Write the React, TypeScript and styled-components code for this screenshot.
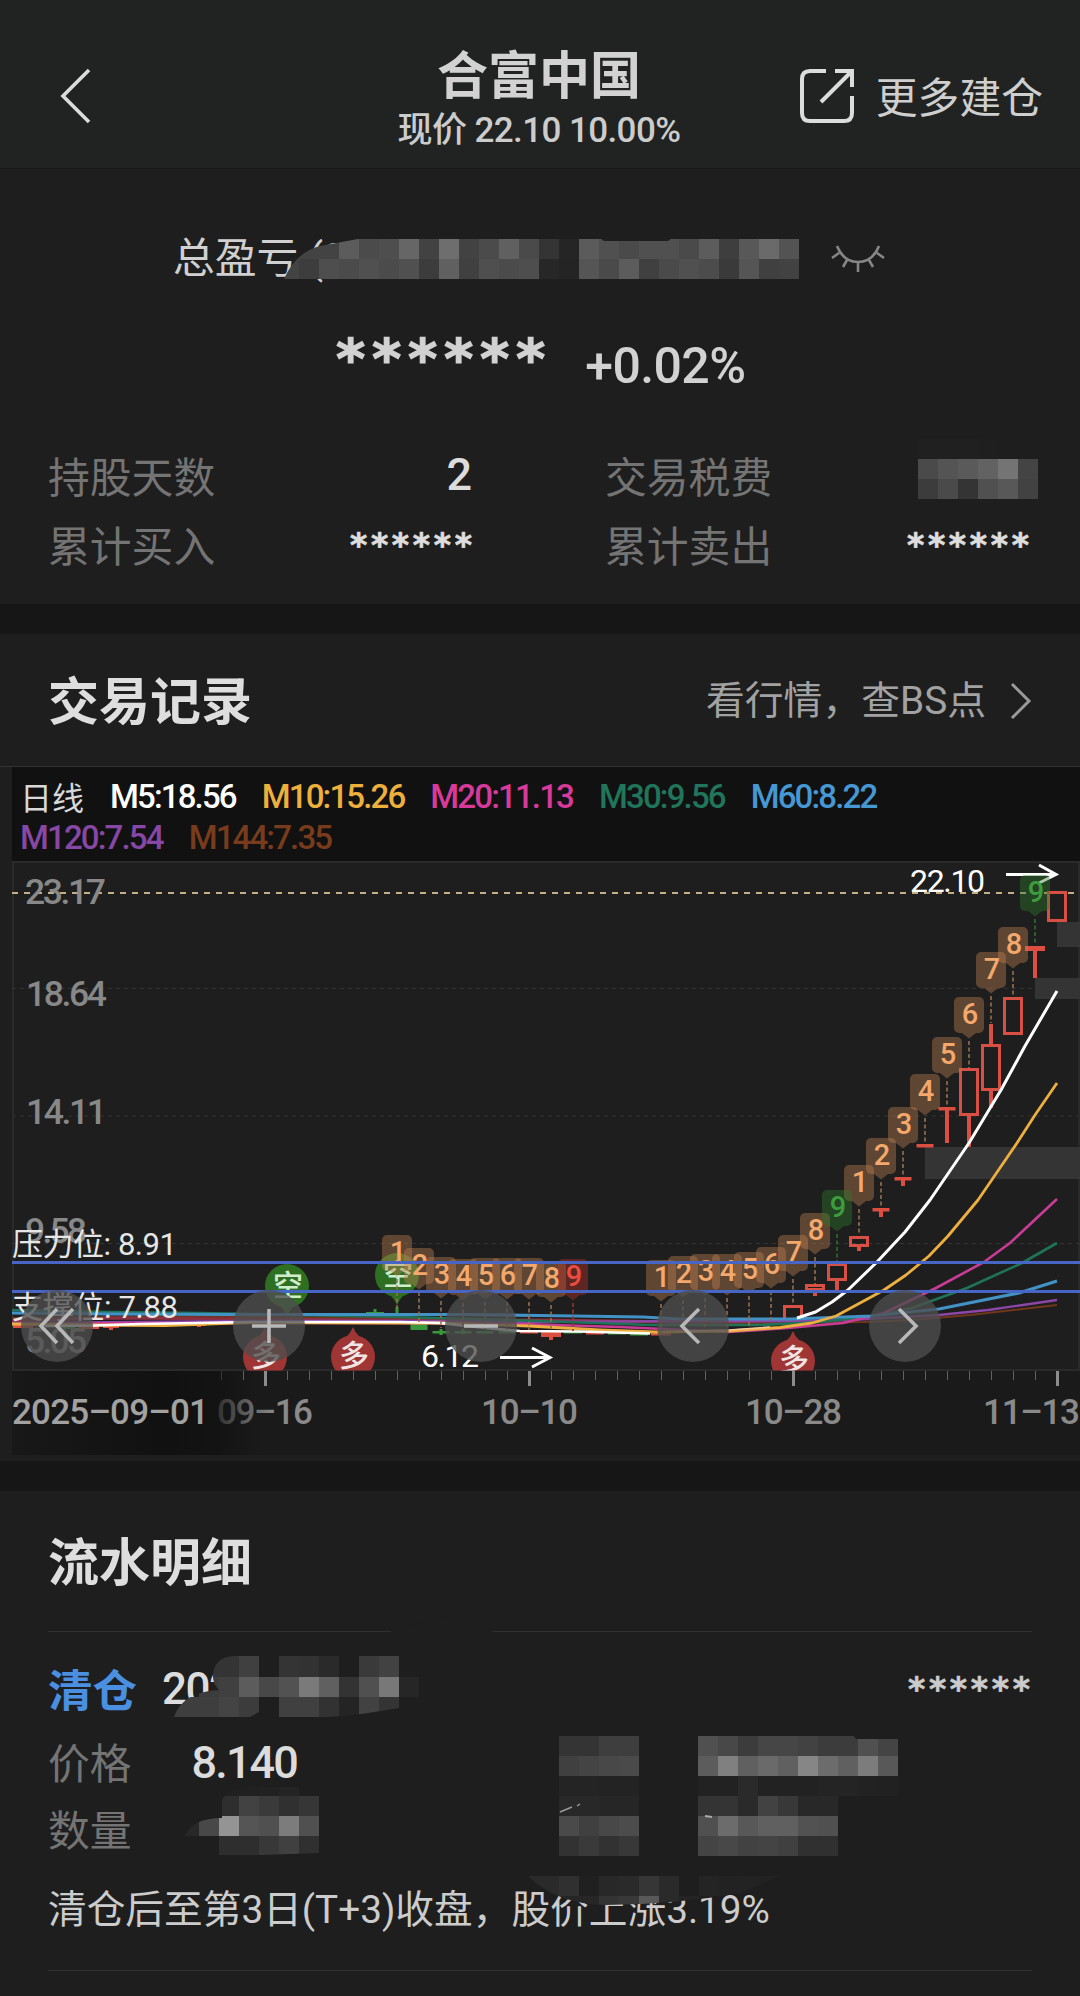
import React from "react";
import styled, { createGlobalStyle } from "styled-components";

const LATIN_CJK = `Roboto, "Noto Sans CJK SC", sans-serif`;
const CJK = `"Noto Sans CJK SC", sans-serif`;

const Global = createGlobalStyle`
  * { box-sizing: border-box; }
  body { margin: 0; background: #1e1e1e; }
`;

const Page = styled.main`
  width: 1080px;
  height: 1996px;
  overflow: hidden;
  background: #1e1e1e;
  color: #dcdcdc;
  font-family: ${LATIN_CJK};
  display: flex;
  flex-direction: column;
`;

const Text = styled.span<{ $size: number; $color?: string; $weight?: number; $track?: number; $line?: number; $cjk?: boolean }>`
  font-family: ${(p) => (p.$cjk ? CJK : LATIN_CJK)};
  font-size: ${(p) => p.$size}px;
  line-height: ${(p) => p.$line ?? 50}px;
  color: ${(p) => p.$color ?? "#dcdcdc"};
  font-weight: ${(p) => p.$weight ?? 400};
  letter-spacing: ${(p) => p.$track ?? 0}px;
  white-space: pre;
`;

const Header = styled.header`
  height: 169px;
  flex: none;
  background: #202322;
  border-bottom: 1px solid #191a1a;
  display: grid;
  grid-template-columns: 340px 398px 342px;
`;

const BackButton = styled.div`
  padding: 68px 0 0 59px;
`;

const HeaderTitle = styled.div`
  display: flex;
  flex-direction: column;
  align-items: center;
  padding-top: 46px;
`;

const HeaderAction = styled.div`
  display: flex;
  justify-content: flex-end;
  align-items: flex-start;
  gap: 21px;
  padding: 68px 37px 0 0;
`;

const Summary = styled.section`
  position: relative;
  height: 435px;
  flex: none;
  padding: 65px 48px 0;
`;

const TotalRow = styled.div`
  display: flex;
  justify-content: space-between;
  height: 50px;
  margin: 0 147px 0 125px;
`;

const EyeSlot = styled.div`
  padding-top: 11px;
`;

const ProfitRow = styled.div`
  display: flex;
  height: 90px;
  margin: 31px 0 0 288px;
`;

const Percent = styled.div`
  margin: 26px 0 0 40px;
`;

const Stats = styled.div`
  display: grid;
  grid-template-columns: 424px 424px;
  column-gap: 133px;
  row-gap: 19px;
  margin-top: 45px;
`;

const StatRow = styled.div`
  display: flex;
  justify-content: space-between;
  height: 50px;
`;

const Divider = styled.div`
  height: 30px;
  flex: none;
  background: #161616;
`;

const Records = styled.section`
  height: 827px;
  flex: none;
`;

const RecordsHead = styled.div`
  display: flex;
  justify-content: space-between;
  height: 133px;
  padding: 38px 48px 0 48px;
  border-bottom: 1px solid #323232;
`;

const MarketLink = styled.div`
  display: flex;
  gap: 24px;
  align-items: flex-start;
  padding-top: 3px;
`;

const ChevronSlot = styled.div`
  padding-top: 7px;
`;

const Legend = styled.div`
  height: 94px;
  margin-left: 12px;
  background: #111111;
  padding: 9px 8px;
`;

const LegendRow = styled.div`
  display: flex;
  gap: 26px;
  height: 41px;
`;

const ChartBox = styled.div`
  position: relative;
  height: 600px;
`;

const Controls = styled.div`
  position: absolute;
  left: 21px;
  top: 429px;
  display: flex;
  gap: 140px;
`;

const RoundButton = styled.button`
  width: 72px;
  height: 72px;
  padding: 0;
  border: 0;
  border-radius: 50%;
  background: rgba(78, 78, 78, 0.78);
  display: flex;
  align-items: center;
  justify-content: center;
`;

const Details = styled.section`
  position: relative;
  flex: none;
  height: 505px;
  padding: 0 48px;
`;

const DetailsTitle = styled.div`
  height: 141px;
  padding-top: 40px;
  border-bottom: 1px solid #303030;
`;

const EntryHead = styled.div`
  display: flex;
  justify-content: space-between;
  height: 104px;
  padding: 31px 2px 0 0;
`;

const EntryName = styled.div`
  display: flex;
  gap: 25px;
`;

const Field = styled.div<{ $height: number }>`
  display: flex;
  height: ${(p) => p.$height}px;
  gap: 60px;
`;

const FieldValue = styled.div`
  padding-top: 2px;
`;

const Note = styled.div`
  height: 94px;
  padding-top: 8px;
  border-bottom: 1px solid #303030;
`;

const Overlay = styled.svg`
  position: absolute;
  left: 0;
  top: 0;
  pointer-events: none;
`;

const StarText = styled.span<{ $size: number; $track: number; $top: number; $stroke: number; $color?: string }>`
  font-family: "DejaVu Sans", sans-serif;
  font-weight: 700;
  font-size: ${(p) => p.$size}px;
  line-height: 50px;
  letter-spacing: ${(p) => p.$track}px;
  margin-right: ${(p) => -p.$track}px;
  color: ${(p) => p.$color ?? "#dedede"};
  -webkit-text-stroke: ${(p) => p.$stroke}px ${(p) => p.$color ?? "#dedede"};
  padding-top: ${(p) => p.$top}px;
`;

/* ---------- pixelated privacy blocks ---------- */

type Row = { x: number; y: number; h?: number; c: string };

function Mosaic({ rows, clip }: { rows: Row[]; clip?: string }) {
  return (
    <g clipPath={clip ? `url(#${clip})` : undefined} shapeRendering="crispEdges">
      {rows.map((r, j) =>
        r.c.split(" ").map((c, i) => (
          <rect key={`${j}-${i}`} x={r.x + i * 20} y={r.y} width={20} height={r.h ?? 20} fill={`#${c}${c}${c}`} />
        ))
      )}
    </g>
  );
}

const totalRows: Row[] = [
  { x: 279, y: 239, c: "43 43 43 5c 4b 4e 66 42 6e 42 4b 60 4a 34 25 5b 50 4a 50 50 4a 5c 3e 58 6a 53" },
  { x: 279, y: 259, c: "43 3d 4e 4b 50 4b 50 3c 60 40 4f 4b 4e 27 24 55 4a 5c 40 4a 50 4c 3a 55 40 42" },
];
const feeRows: Row[] = [
  { x: 918, y: 439, c: "20 20 20 1f 1e 1e" },
  { x: 918, y: 459, c: "4a 54 5a 62 74 44" },
  { x: 918, y: 479, c: "3c 4a 34 50 58 42" },
];
const dateRows: Row[] = [
  { x: 199, y: 1656, h: 21, c: "34 34 40 1e 34 32 2a 1e 3a 42" },
  { x: 199, y: 1677, c: "3c 40 5c 48 52 7a 60 33 50 78 26" },
  { x: 159, y: 1697, c: "3e 3e 3e 44 3c 1e 40 40 32 24 42 34" },
];
const qtyRows: Row[] = [
  { x: 219, y: 1787, h: 9, c: "20 20 21 24 1e" },
  { x: 219, y: 1796, c: "2e 42 3a 30 36" },
  { x: 179, y: 1816, c: "28 48 94 55 50 7c 50" },
  { x: 219, y: 1836, h: 19, c: "2e 2e 38 40 30" },
];
const labelRows: Row[] = [
  { x: 559, y: 1736, c: "34 34 3e 3e" },
  { x: 559, y: 1756, c: "40 44 48 4a" },
  { x: 559, y: 1776, c: "24 24 23 23" },
  { x: 559, y: 1796, c: "28 28 26 26" },
  { x: 559, y: 1816, c: "4a 40 48 4c" },
  { x: 559, y: 1836, c: "32 3a 32 38" },
];
const valueRows: Row[] = [
  { x: 698, y: 1736, c: "50 48 3c 46 46 42 3c 3c 50 44" },
  { x: 698, y: 1756, c: "5c 80 60 6a 60 86 6c 60 7c 58" },
  { x: 698, y: 1776, c: "22 22 2a 22 22 22 24 24 22 21" },
  { x: 698, y: 1796, c: "34 34 2a 42 38 28 28" },
  { x: 698, y: 1816, c: "50 6c 58 60 60 52 50" },
  { x: 698, y: 1836, c: "44 48 42 44 40 30 30" },
];
const smearRows: Row[] = [
  { x: 519, y: 1876, c: "2a 2a 30 20 28 2a 36 2a 1e 24 22 23 22" },
  { x: 519, y: 1896, c: "26 26 26 26 33 38 58 2a 24 1f 1f 1f 1f" },
];

/* ---------- chart ---------- */

const INDICATORS = [
  ["M5:18.56", "#ffffff"],
  ["M10:15.26", "#edb03c"],
  ["M20:11.13", "#d83a9c"],
  ["M30:9.56", "#20755a"],
  ["M60:8.22", "#4698d4"],
] as const;

const INDICATORS_2 = [
  ["M120:7.54", "#8648a4"],
  ["M144:7.35", "#783c1c"],
] as const;

type Badge = [x: number, top: number, n: string, to: number];

const badges: Badge[] = [
  [397, 1235, "1", 1308],
  [419, 1248, "2", 1322],
  [441, 1257, "3", 1328],
  [463, 1259, "4", 1330],
  [485, 1258, "5", 1330],
  [507, 1258, "6", 1330],
  [529, 1258, "7", 1330],
  [551, 1261, "8", 1331],
  [661, 1260, "1", 1333],
  [683, 1256, "2", 1328],
  [705, 1254, "3", 1327],
  [727, 1254, "4", 1327],
  [749, 1252, "5", 1326],
  [771, 1247, "6", 1320],
  [793, 1235, "7", 1305],
  [815, 1213, "8", 1284],
  [859, 1165, "1", 1235],
  [881, 1138, "2", 1208],
  [903, 1107, "3", 1177],
  [925, 1074, "4", 1144],
  [947, 1037, "5", 1107],
  [969, 997, "6", 1068],
  [991, 952, "7", 1023],
  [1013, 927, "8", 998],
];
const greenBadges: Badge[] = [
  [837, 1190, "9", 1262],
  [1035, 875, "9", 945],
];
const redBadges: Badge[] = [[573, 1259, "9", 1331]];

function Badges({ list, fill, ink, line }: { list: Badge[]; fill: string; ink: string; line: string }) {
  return (
    <>
      {list.map(([x, t, n, to]) => (
        <g key={x}>
          <path
            d={`M${x - 10} ${t}h20a5 5 0 0 1 5 5v26a5 5 0 0 1 -5 5h-3l-7 5.500l-7 -5.500h-3a5 5 0 0 1 -5 -5v-26a5 5 0 0 1 5 -5z`}
            fill={fill}
          />
          <path d={`M${x} ${t + 44}V${to}`} stroke={line} strokeWidth={1.6} strokeDasharray="4 2.5" />
          <text x={x + 1} y={t + 27} textAnchor="middle" fontSize={29} fontWeight={500} fill={ink}>
            {n}
          </text>
        </g>
      ))}
    </>
  );
}

function Pin({ x, y, up }: { x: number; y: number; up?: boolean }) {
  const s = up ? -1 : 1;
  return (
    <g>
      <path
        d={`M${x - 20} ${y + s * 9}Q${x - 3} ${y + s * 21} ${x} ${y + s * 30}Q${x + 3} ${y + s * 21} ${x + 20} ${y + s * 9}z`}
        fill={up ? "#9f3534" : "#2f6f22"}
      />
      <circle cx={x} cy={y} r={22} fill={up ? "#9f3534" : "#2f6f22"} />
      <text x={x + 1} y={up ? y + 9 : y + 10} textAnchor="middle" fontSize={30} fontWeight={500} fill={up ? "#f0e4e4" : "#cfeccb"}>
        {up ? "多" : "空"}
      </text>
    </g>
  );
}

/* centre x, body top, body bottom, high, low */
const hollow = [
  [1057, 891, 922, 891, 922],
  [1013, 997, 1035, 997, 1035],
  [991, 1044, 1091, 1024, 1108],
  [969, 1068, 1116, 1068, 1147],
  [859, 1236, 1247, 1236, 1251],
  [837, 1263, 1281, 1263, 1290],
  [815, 1284, 1291, 1284, 1296],
  [793, 1305, 1322, 1305, 1322],
];
/* centre x, bar top, bar height, half width, high, low */
const red = [
  [1035, 946, 5, 10, 946, 978],
  [947, 1107, 3.5, 8.5, 1107, 1143],
  [925, 1144, 3.5, 8.5, 1144, 1147],
  [903, 1177, 3.5, 8.5, 1177, 1186],
  [881, 1208, 3.5, 8.5, 1208, 1217],
  [551, 1332, 5, 10, 1332, 1340],
  [529, 1331, 2.5, 9, 1331, 1333],
  [595, 1332, 2.5, 9, 1332, 1334],
  [661, 1333, 2.5, 10, 1333, 1335],
  [353, 1321, 3, 10, 1321, 1324],
  [23, 1323, 5, 10, 1323, 1328],
  [89, 1326, 3, 10, 1326, 1329],
  [111, 1325, 3, 8, 1325, 1330],
  [199, 1323, 3, 7, 1323, 1327],
];
const green = [
  [419, 1324, 6, 8.5, 1324, 1330],
  [441, 1331, 2.5, 8.5, 1329, 1335],
  [463, 1331, 2.5, 8.5, 1329, 1334],
  [485, 1331, 2.5, 8.5, 1331, 1333],
  [507, 1331, 2.5, 8.5, 1331, 1333],
  [573, 1331, 2.5, 9, 1331, 1333],
  [617, 1332, 2.5, 9, 1332, 1334],
  [639, 1333, 2.5, 9, 1333, 1335],
  [375, 1312, 2, 9, 1309, 1314],
  [331, 1322, 2, 7, 1322, 1324],
  [397, 1313, 2, 5, 1307, 1315],
  [67, 1326, 3, 8, 1326, 1329],
];

const ticks = Array.from({ length: 39 }, (_, k) => ({ x: 1057 - 22 * k, big: k % 12 === 0 }));

const averages: [string, string, number][] = [
  ["#71371a", "12,1318 200,1316.500 400,1318 540,1321 700,1323 793,1323 864,1322 912,1320 970,1315 1057,1305", 2],
  ["#8a3040", "12,1321 110,1318 250,1319 400,1320 540,1320 690,1322 790,1321", 3],
  ["#8c46a8", "12,1323 140,1322 260,1321 400,1321 540,1322 700,1321 790,1321 850,1320 939,1315 988,1310 1057,1300", 2.4],
  ["#1f7358", "12,1310 110,1312 200,1313 400,1317 540,1321 650,1325 760,1325 820,1322 867,1317 912,1308 967,1288 1022,1263 1057,1243", 2.6],
  ["#c83c96", "12,1324 140,1323 400,1323 520,1324 620,1327 729,1332 788,1328 843,1323 884,1313 936,1288 984,1262 1010,1243 1057,1199", 2.6],
  ["#4292c6", "12,1313 110,1314 220,1314.500 470,1314.500 540,1315.500 643,1317 678,1319 791,1319 871,1316 939,1309 1019,1293 1057,1281", 3.2],
  ["#edb040", "12,1324 90,1325 165,1325.500 250,1322.500 400,1323 440,1323 529,1326 600,1330 655,1332 729,1331 780,1327.500 812,1323 836,1316 884,1290 906,1275 929,1256 948,1236 978,1200 1017,1143 1035,1115 1057,1083", 2.8],
  ["#f6c8a0", "690,1331 729,1330 770,1327", 1.6],
  ["#ffffff", "45,1326 95,1325.500 140,1324 250,1322 400,1322 440,1323 485,1328 520,1331 580,1331.500 650,1333.500", 2.6],
  ["#ffffff", "797,1318 815.500,1312 832,1302 848,1290 877,1262 905,1232 930,1200 969,1143 1001,1090 1025,1046 1057,991", 3],
];

const prices: [string, number, number, number][] = [
  ["23.17", 25, 904, 81],
  ["18.64", 26, 1006, 81],
  ["14.11", 26, 1124, 81],
  ["9.58", 25, 1243, 62],
  ["5.05", 25, 1353, 62],
];

const dates: [string, number, number, string][] = [
  ["09–16", 217, 96, "url(#dateFade)"],
  ["10–10", 481, 97, "#8a8a8a"],
  ["10–28", 745, 97, "#8a8a8a"],
  ["11–13", 983, 97, "#8a8a8a"],
];

function Candles() {
  return (
    <>
      {green.map(([x, y, h, w, hi, lo]) => (
        <g key={x} fill="#3a983c">
          <rect x={x - w} y={y} width={w * 2} height={h} />
          <rect x={x - 1.5} y={hi} width={3} height={lo - hi} />
        </g>
      ))}
      {red.map(([x, y, h, w, hi, lo]) => (
        <g key={x} fill="#dc4e40">
          <rect x={x - w} y={y} width={w * 2} height={h} />
          <rect x={x - 2} y={hi} width={4} height={lo - hi} />
        </g>
      ))}
      {hollow.map(([x, t, b, hi, lo]) => (
        <g key={x}>
          <path d={`M${x} ${hi}V${t}M${x} ${b}V${lo}`} stroke="#d85044" strokeWidth={4} />
          <rect x={x - 8.5} y={t + 1.5} width={17} height={b - t - 3} fill="none" stroke="#d85044" strokeWidth={3} />
        </g>
      ))}
    </>
  );
}

function Chart() {
  return (
    <svg width={1080} height={600} viewBox="0 861 1080 600" fontFamily={LATIN_CJK} display="block">
      <defs>
        <linearGradient id="axisShade" x1="12" x2="262" y1="0" y2="0" gradientUnits="userSpaceOnUse">
          <stop offset="0" stopColor="#181818" />
          <stop offset="0.6" stopColor="#111111" />
          <stop offset="0.82" stopColor="#131313" />
          <stop offset="1" stopColor="#1a1a1a" />
        </linearGradient>
        <linearGradient id="dateFade" x1="215" x2="275" y1="0" y2="0" gradientUnits="userSpaceOnUse">
          <stop offset="0" stopColor="#2e2e2e" />
          <stop offset="1" stopColor="#8a8a8a" />
        </linearGradient>
        <clipPath id="plot">
          <rect x="12" y="861" width="1068" height="509.500" />
        </clipPath>
      </defs>
      <rect x="12" y="1371" width="1068" height="84" fill="#1a1a1a" />
      <rect x="12" y="1371" width="250" height="84" fill="url(#axisShade)" />
      <path d="M12 862H1080M13 861V1370M12 1370H1080M1079 861V1370" stroke="#2a2a2a" strokeWidth={2} fill="none" />
      <path d="M12 988.500H1080M12 1243.500H1080" stroke="#343434" strokeWidth={1} strokeDasharray="4 4" />
      <path d="M12 1116H1080" stroke="#282828" strokeWidth={2} strokeDasharray="4 4" />
      <path d="M12 893H1076" stroke="#c4ae88" strokeWidth={2} strokeDasharray="6 6" />
      <g fill="#343434">
        <rect x="1057" y="922" width="23" height="25" />
        <rect x="1035" y="978" width="45" height="21" />
        <rect x="925" y="1147" width="155" height="32" />
      </g>
      {prices.map(([t, x, y, w]) => (
        <text key={t} x={x} y={y} fontSize={35.5} fontWeight={500} fill="#888888" textLength={w}>
          {t}
        </text>
      ))}
      <g clipPath="url(#plot)">
        <Pin x={265} y={1357} up />
        <Pin x={353} y={1357} up />
        <Pin x={793} y={1361} up />
        <Pin x={287} y={1286} />
        <Pin x={397} y={1275} />
        <Candles />
        {averages.map(([c, pts, w], i) => (
          <polyline key={i} points={pts} fill="none" stroke={c} strokeWidth={w} strokeLinejoin="round" />
        ))}
        <path d="M1006 874.500H1055M1039 865L1056 874.500L1039 883" stroke="#fff" strokeWidth={3} fill="none" />
        <Badges list={badges} fill="rgba(192,130,82,0.4)" ink="#f4a86c" line="#96704e" />
        <Badges list={greenBadges} fill="rgba(42,122,42,0.4)" ink="#3c9c3c" line="#2e6c30" />
        <Badges list={redBadges} fill="rgba(190,50,42,0.4)" ink="#e84c3e" line="#8e3a32" />
        <path d="M12 1262.500H1080M12 1291.500H1080" stroke="#4665c4" strokeWidth={3} />
      </g>
      <text x="910" y="892" fontSize={32} fill="#fff" textLength={75}>22.10</text>
      <text x="421" y="1367" fontSize={32} fill="#fff" textLength={58}>6.12</text>
      <path d="M500 1357.500H549M532 1348L550 1357.500L532 1367" stroke="#fff" strokeWidth={3} fill="none" />
      <text x="12" y="1255" fontSize={31} fill="#e6e6e6" textLength={165}>压力位: 8.91</text>
      <text x="12" y="1318" fontSize={31} fill="#e6e6e6" textLength={166}>支撑位: 7.88</text>
      {ticks.map(({ x, big }) => (
        <rect
          key={x}
          x={big ? x - 1 : x}
          y={1371}
          width={big ? 3 : 1}
          height={big ? 15 : 9}
          fill={big ? "#8c8c8c" : x < 210 ? "none" : x < 240 ? "#383838" : "#626262"}
        />
      ))}
      {dates.map(([t, x, w, fill]) => (
        <text key={t} x={x} y={1424} fontSize={35} fontWeight={500} fill={fill} textLength={w}>
          {t}
        </text>
      ))}
      <text x="12" y="1424" fontSize={35} fontWeight={500} fill="#a2a2a2" textLength={197}>2025–09–01</text>
    </svg>
  );
}

const CONTROL_PATHS = ["M35 2L19 19L35 36M19 2L3 19L19 36", "M19 2V36M2 19H36", "M2 19H36", "M25 2L8 19L25 36", "M13 2L30 19L13 36"];

export default function App() {
  return (
    <Page>
      <Global />
      <Header>
        <BackButton>
          <svg width="34" height="56" viewBox="0 0 34 56" fill="none" stroke="#dcdcdc" strokeWidth="3.600">
            <path d="M30 2L4 28L30 54" />
          </svg>
        </BackButton>
        <HeaderTitle>
          <Text $size={51} $weight={600} $line={52} $color="#d2d2d2" $cjk>合富中国</Text>
          <Text $size={35} $line={66} $weight={500} $color="#cccccc" $track={-0.6}>现价 22.10 10.00%</Text>
        </HeaderTitle>
        <HeaderAction>
          <svg width="56" height="56" viewBox="0 0 56 56" fill="none" stroke="#dcdcdc" strokeWidth="4">
            <path d="M27 3H11Q3 3 3 11V45Q3 53 11 53H45Q53 53 53 45V28M36 3H53V19M53 3L22 34" />
          </svg>
          <Text $size={41.8} $line={54} $color="#cfcfcf" $cjk>更多建仓</Text>
        </HeaderAction>
      </Header>

      <Summary>
        <TotalRow>
          <Text $size={41.8} $color="#d0d0d0">总盈亏 (20</Text>
          <EyeSlot>
            <svg width="54" height="28" viewBox="0 0 54 28" fill="none" stroke="#868686" strokeWidth="2.600">
              <path d="M6 1C10 11 17 17 27 17S44 11 48 1M8 8L1 13M46 8L53 13M16 15L12 22M38 15L42 22M27 17V27" />
            </svg>
          </EyeSlot>
        </TotalRow>
        <ProfitRow>
          <StarText $size={56} $track={6.7} $top={19} $stroke={1.2} $color="#d2d2d2">******</StarText>
          <Percent>
            <Text $size={50} $weight={500} $color="#d2d2d2" $track={-0.6}>+0.02%</Text>
          </Percent>
        </ProfitRow>
        <Stats>
          <StatRow>
            <Text $size={41.8} $color="#747474" $cjk>持股天数</Text>
            <Text $size={45} $weight={500}>2</Text>
          </StatRow>
          <StatRow>
            <Text $size={41.8} $color="#747474" $cjk>交易税费</Text>
          </StatRow>
          <StatRow>
            <Text $size={41.8} $color="#747474" $cjk>累计买入</Text>
            <StarText $size={33} $track={3.7} $top={2} $stroke={0.7}>******</StarText>
          </StatRow>
          <StatRow>
            <Text $size={41.8} $color="#747474" $cjk>累计卖出</Text>
            <StarText $size={33} $track={3.7} $top={2} $stroke={0.7}>******</StarText>
          </StatRow>
        </Stats>
        <Overlay width="1080" height="435" viewBox="0 169 1080 435">
          <clipPath id="totalClip">
            <path d="M284 279Q296 252 320 246L358 239H799V279z" />
          </clipPath>
          <Mosaic rows={totalRows} clip="totalClip" />
          <path d="M600 238H672L668 241H604z" fill="#1e1e1e" />
          <Mosaic rows={feeRows} />
        </Overlay>
      </Summary>

      <Divider />

      <Records>
        <RecordsHead>
          <Text $size={51} $weight={700} $line={52} $color="#dedede" $cjk>交易记录</Text>
          <MarketLink>
            <Text $size={38.8} $line={52} $color="#a2a2a2">看行情，查BS点</Text>
            <ChevronSlot>
              <svg width="22" height="38" viewBox="0 0 22 38" fill="none" stroke="#9a9a9a" strokeWidth="3">
                <path d="M2 2L19 19L2 36" />
              </svg>
            </ChevronSlot>
          </MarketLink>
        </RecordsHead>
        <Legend>
          <LegendRow>
            <Text $size={32} $line={40} $color="#d8d8d8" $cjk>日线</Text>
            {INDICATORS.map(([t, c]) => (
              <Text key={t} $size={33} $line={42} $weight={500} $color={c} $track={-1.85}>{t}</Text>
            ))}
          </LegendRow>
          <LegendRow>
            {INDICATORS_2.map(([t, c]) => (
              <Text key={t} $size={33} $line={42} $weight={500} $color={c} $track={-1.85}>{t}</Text>
            ))}
          </LegendRow>
        </Legend>
        <ChartBox>
          <Chart />
          <Controls>
            {CONTROL_PATHS.map((d) => (
              <RoundButton key={d}>
                <svg width="38" height="38" viewBox="0 0 38 38" fill="none" stroke="#b8b8b8" strokeWidth="3.600">
                  <path d={d} />
                </svg>
              </RoundButton>
            ))}
          </Controls>
        </ChartBox>
      </Records>

      <Divider />

      <Details>
        <DetailsTitle>
          <Text $size={51} $weight={700} $line={56} $color="#dedede" $cjk>流水明细</Text>
        </DetailsTitle>
        <EntryHead>
          <EntryName>
            <Text $size={44.5} $weight={700} $color="#4a8fe0" $cjk>清仓</Text>
            <Text $size={44} $line={52} $weight={500} $track={-1.5}>202</Text>
          </EntryName>
          <StarText $size={33} $track={3.7} $top={2} $stroke={0.6} $color="#cccccc">******</StarText>
        </EntryHead>
        <Field $height={67}>
          <Text $size={41.8} $color="#747474" $cjk>价格</Text>
          <FieldValue>
            <Text $size={45} $weight={500} $track={-1.9}>8.140</Text>
          </FieldValue>
        </Field>
        <Field $height={74}>
          <Text $size={41.8} $color="#747474" $cjk>数量</Text>
        </Field>
        <Note>
          <Text $size={38.7} $color="#cccccc">清仓后至第3日(T+3)收盘，股价上涨3.19%</Text>
        </Note>
        <Overlay width="1080" height="505" viewBox="0 1491 1080 505">
          <clipPath id="dateClip">
            <path d="M174 1717Q182 1692 219 1690Q213 1684 213 1677Q213 1656 236 1656H419V1697H399V1708L362 1714L330 1717H267L259 1712L250 1717z" />
          </clipPath>
          <clipPath id="qtyClip">
            <path d="M185 1836Q192 1818 222 1818V1800Q228 1786 270 1786H319V1853L262 1855H219V1836z" />
          </clipPath>
          <clipPath id="smearClip">
            <path d="M528 1876Q556 1904 605 1905Q680 1904 740 1893L780 1876z" />
          </clipPath>
          <path d="M391 1630Q440 1620 470 1610Q510 1612 491 1634H391z" fill="#1e1e1e" />
          <Mosaic rows={dateRows} clip="dateClip" />
          <Mosaic rows={qtyRows} clip="qtyClip" />
          <Mosaic rows={labelRows} />
          <Mosaic rows={valueRows} />
          <path d="M853 1735H899V1739H856z" fill="#1e1e1e" />
          <path d="M560 1812L572 1807M577 1806L580 1804" stroke="#9a9a9a" strokeWidth="1.500" />
          <path d="M705 1816L712 1817" stroke="#aaaaaa" strokeWidth="2" />
          <Mosaic rows={smearRows} clip="smearClip" />
        </Overlay>
      </Details>
    </Page>
  );
}
